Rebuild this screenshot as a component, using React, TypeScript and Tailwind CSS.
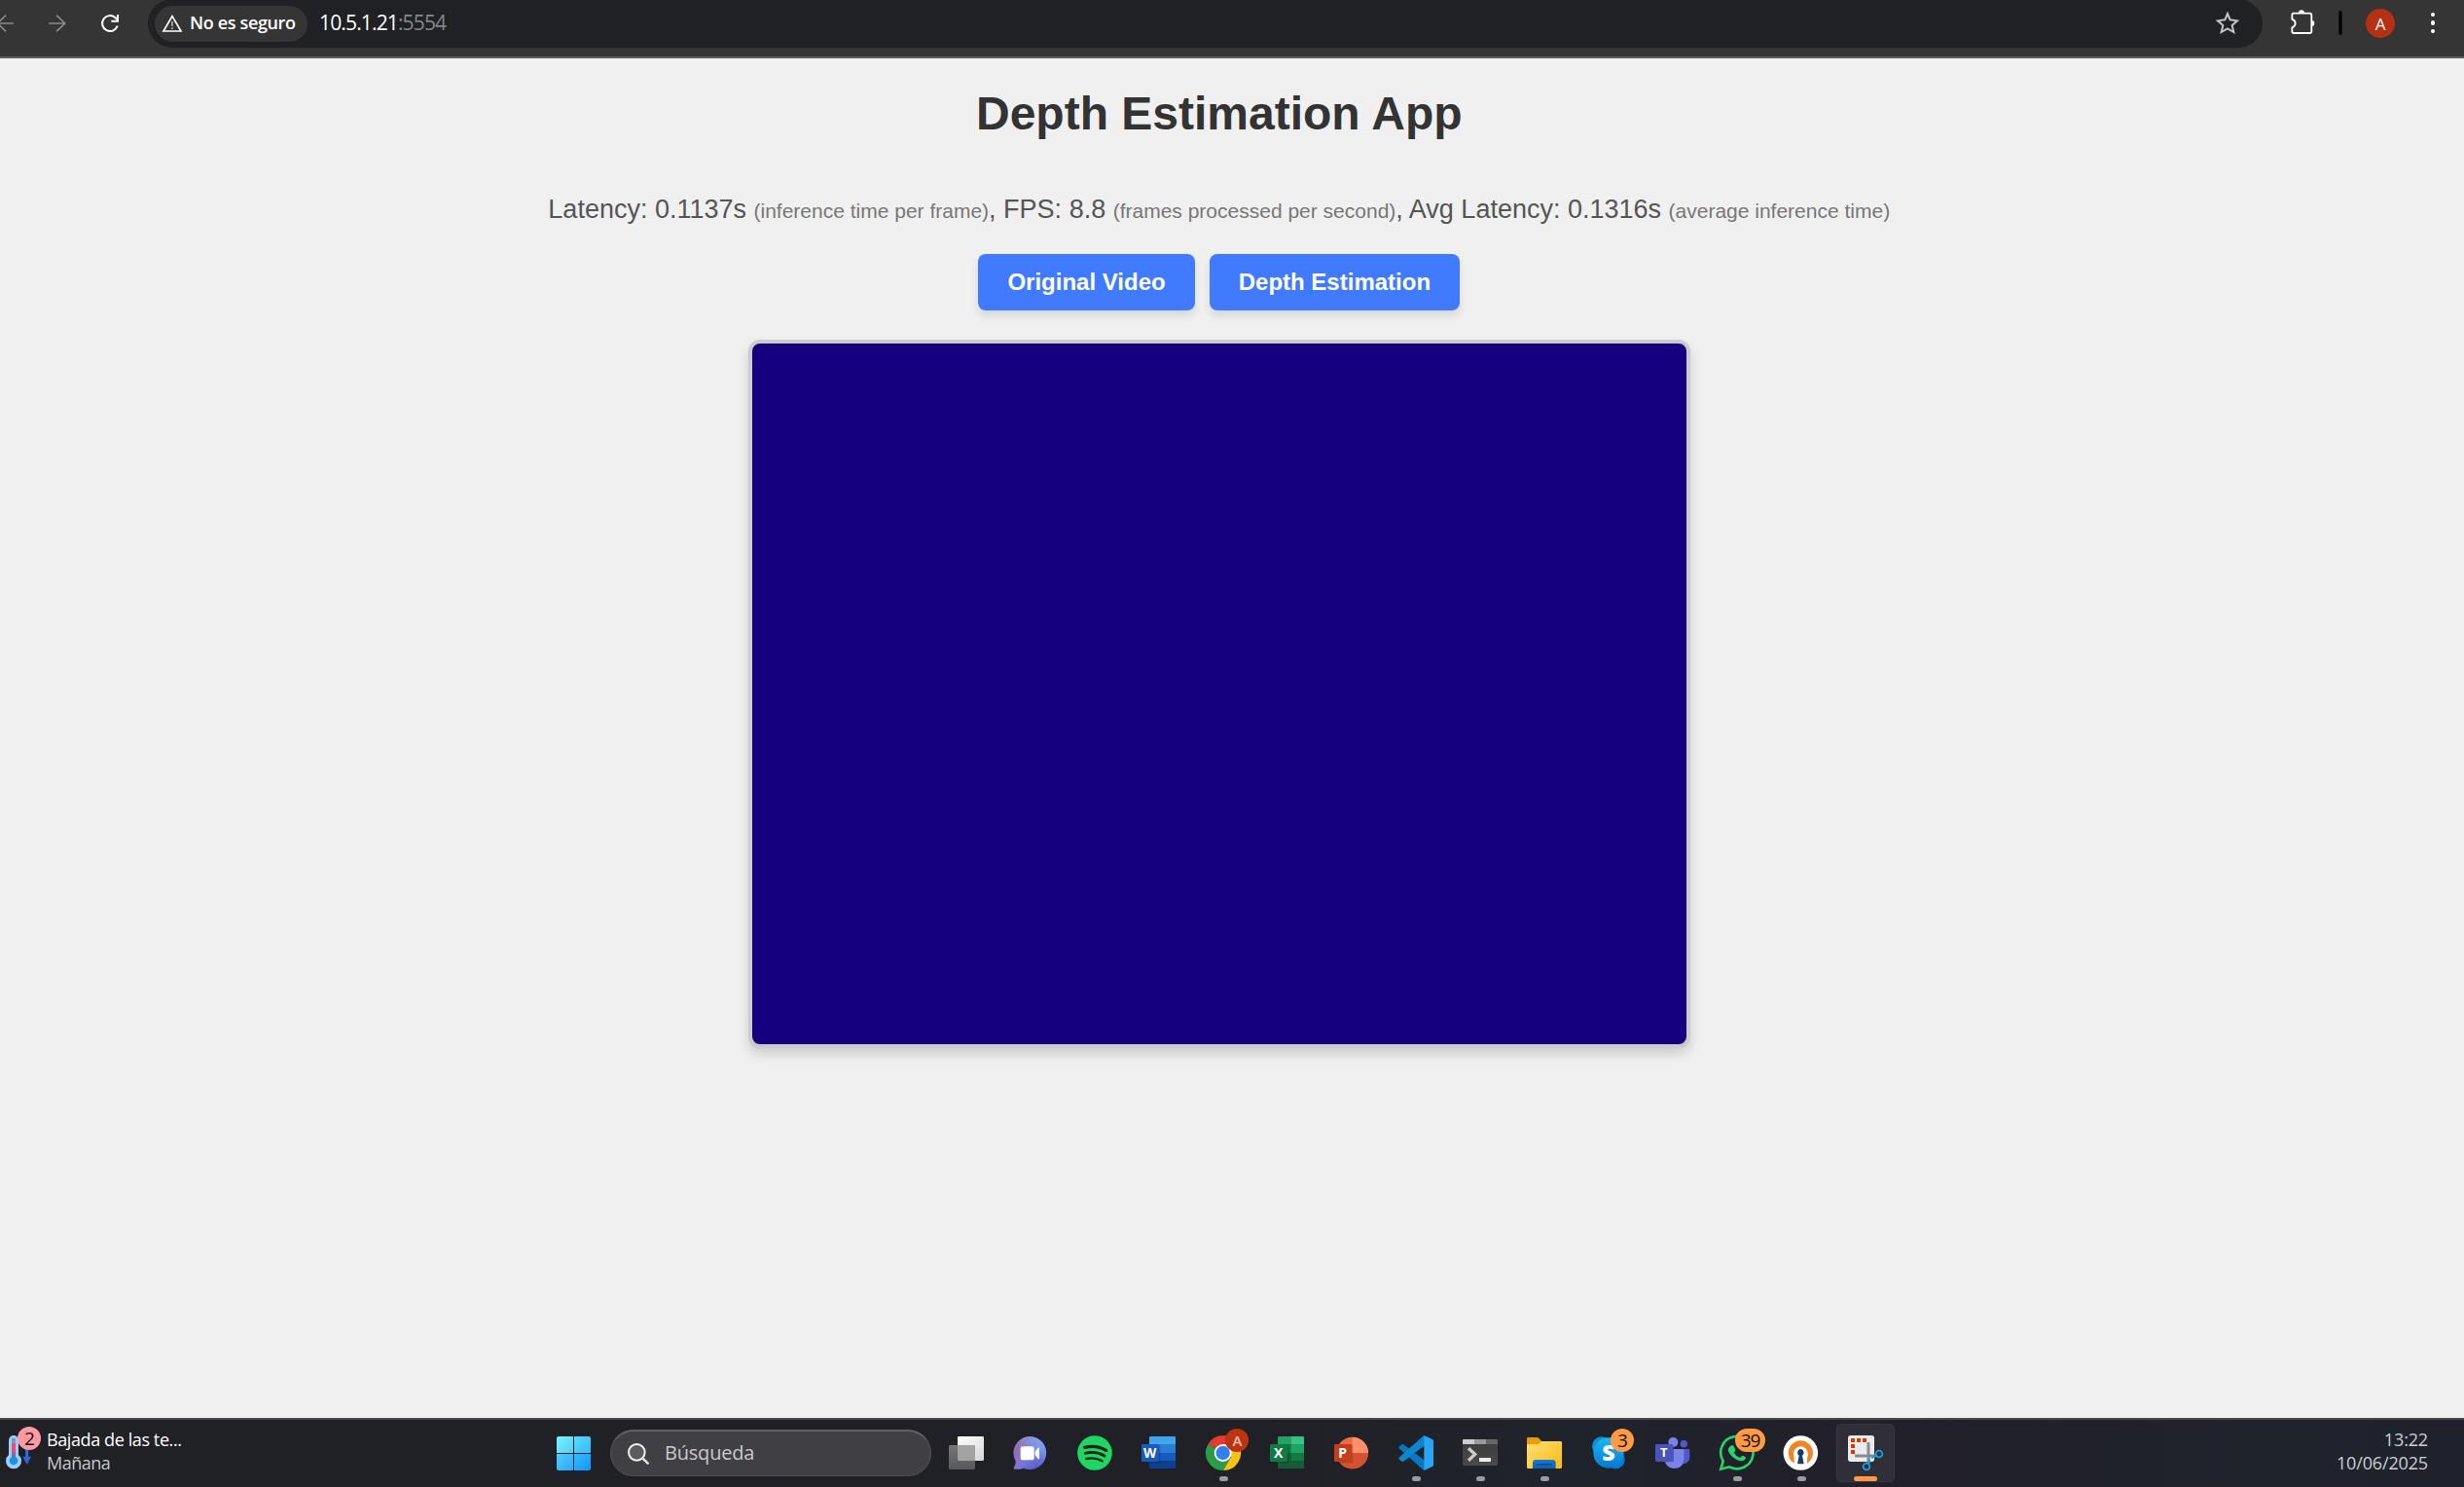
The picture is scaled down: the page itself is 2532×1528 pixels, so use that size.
import React from "react";

const UI = "font-['Open_Sans','Noto_Sans',sans-serif]";

function BrowserBar() {
  return (
    <header className="flex h-[60px] shrink-0 items-start border-b-2 border-[#5f5f5f] bg-[#353535]">
      <svg className="h-[50px] w-[152px] shrink-0" viewBox="0 0 456 150" fill="none">
        <path d="M42 72H-12M18 47L-7 72L18 97" stroke="#8b8b8b" strokeWidth="5" />
        <path d="M150 72H200M174 47L200 72L174 97" stroke="#8b8b8b" strokeWidth="5" />
        <path d="M362 80A24 24 0 1 1 355 54L363 62" stroke="#fff" strokeWidth="6" />
        <path d="M366 45V68H343V62H360V45Z" fill="#fff" />
      </svg>
      <div className="mt-[-1px] flex h-[50px] w-[2173px] shrink-0 items-center rounded-full bg-[#202124] pl-[7px]">
        <div className="flex h-[37px] w-[157px] items-center rounded-full bg-[#353535]">
          <svg className="ml-[7px] h-[22px] w-[22px]" viewBox="0 0 66 66" fill="none">
            <path d="M33 11L60 57H6Z" stroke="#fff" strokeWidth="5" />
            <path d="M33 27V42M33 46V51" stroke="#d0d0d0" strokeWidth="4" />
          </svg>
          <span className={`${UI} mb-[2px] ml-[7px] text-[18px] font-semibold leading-none tracking-[-0.35px] whitespace-nowrap text-white`}>No es seguro</span>
        </div>
        <span className={`${UI} mb-[1px] ml-[12px] text-[21px] leading-none tracking-[-0.85px] text-white`}>
          10.5.1.21<span className="text-[#85878a]">:5554</span>
        </span>
        <svg className="mr-[23px] ml-auto h-[26px] w-[26px]" viewBox="133 33 78 78" fill="none">
          <path d="M172 42L180 61L202 64L186 78L191 99L172 88L153 99L158 78L142 64L164 61Z" stroke="#c3c4c6" strokeWidth="6" />
        </svg>
      </div>
      <svg className="h-[50px] w-[90px] shrink-0" viewBox="279 0 270 150" fill="none">
        <path d="M373 41H424Q430 41 430 47V97Q430 102 424 102H375Q370 102 370 97V85Q380 81 380 72Q380 63 370 59V46Q370 41 375 41" stroke="#fff" strokeWidth="5.5" />
        <path d="M390 40a9 9 0 0 1 18 0ZM430 63a9 9 0 0 1 0 18Z" fill="#fff" />
        <rect x="514" y="34" width="10" height="73" rx="4" fill="#000" />
      </svg>
      <div className={`${UI} mt-[9px] ml-[16px] flex h-[30px] w-[30px] shrink-0 items-center justify-center rounded-full bg-[#b63013] text-[17px] leading-none text-white`}>A</div>
      <div className="mt-[13px] ml-[37px] flex flex-col gap-[4px]">
        <i className="h-[4.4px] w-[4.4px] rounded-full bg-white" />
        <i className="h-[4.4px] w-[4.4px] rounded-full bg-white" />
        <i className="h-[4.4px] w-[4.4px] rounded-full bg-white" />
      </div>
    </header>
  );
}

function Note({ children }: { children: React.ReactNode }) {
  return <small className="text-[21px] leading-none text-[#777]">({children})</small>;
}

function ModeButton({ children }: { children: React.ReactNode }) {
  return (
    <button className="h-[58px] rounded-[8px] bg-[#407bff] px-[30px] text-[24px] leading-none font-bold text-white shadow-[0_6px_9px_rgba(0,0,0,0.1)]">
      {children}
    </button>
  );
}

function Page() {
  return (
    <main className="flex grow flex-col items-center bg-[#f0f0f0] pr-[26.5px] font-['Liberation_Sans',Arial,sans-serif]">
      <h1 className="mt-[30px] text-[48px] leading-[54px] font-bold text-[#333]">Depth Estimation App</h1>
      <p className="mt-[55px] h-[32px] text-[27px] leading-[32px] whitespace-nowrap text-[#555]">
        Latency: 0.1137s <Note>inference time per frame</Note>, FPS: 8.8 <Note>frames processed per second</Note>, Avg Latency: 0.1316s <Note>average inference time</Note>
      </p>
      <div className="mt-[30px] flex gap-[15px]">
        <ModeButton>Original Video</ModeButton>
        <ModeButton>Depth Estimation</ModeButton>
      </div>
      <div className="mt-[30px] h-[728px] w-[968px] rounded-[12px] border-4 border-[#ccc] bg-[#150080] shadow-[0_6px_12px_rgba(0,0,0,0.15)]" />
    </main>
  );
}

function Icon({ x, children }: { x: number; children: React.ReactNode }) {
  return (
    <svg className="block h-[69px] w-[66px]" viewBox={`${x} 57 198 207`} fontFamily="Open Sans, sans-serif">
      {children}
    </svg>
  );
}

const dot = (x: number) => <rect x={x} y="231" width="27" height="15" rx="7.5" fill="#9b9ca0" />;

function Badge({ children, className }: { children: React.ReactNode; className: string }) {
  return (
    <span className={`${UI} absolute top-[9px] flex h-[24px] items-center justify-center rounded-full text-[19px] leading-none tracking-[-1px] ${className}`}>
      {children}
    </span>
  );
}

function Apps() {
  return (
    <div className="ml-[3px] flex">
      <Icon x={0}>
        <defs><linearGradient id="tv" x2="1" y2="1"><stop stopColor="#fff" /><stop offset="1" stopColor="#d6d6d6" /></linearGradient>
          <linearGradient id="tg" x2="0" y2="1"><stop stopColor="#777" /><stop offset="1" stopColor="#575757" /></linearGradient></defs>
        <rect x="72" y="108" width="81" height="75" rx="4" fill="url(#tv)" />
        <rect x="45" y="135" width="81" height="75" rx="4" fill="url(#tg)" />
        <path d="M72 135H122Q126 135 126 139V183H76Q72 183 72 179Z" fill="#a3a3a3" />
      </Icon>
      <Icon x={198}>
        <defs><linearGradient id="ch" x1="0.1" y1="0.2" x2="0.9" y2="0.9"><stop stopColor="#9a6bb0" /><stop offset=".5" stopColor="#7a78d8" /><stop offset="1" stopColor="#4f55c8" /></linearGradient>
          <linearGradient id="ch2" x1="1" x2="0" y2="1"><stop stopColor="#7fb2f5" /><stop offset=".6" stopColor="#7fb2f5" stopOpacity="0" /></linearGradient></defs>
        <path d="M295 108A51 51 0 1 1 275 206Q262 211 247 209Q243 208 246 203Q253 192 251 184A51 51 0 0 1 295 108Z" fill="url(#ch)" />
        <circle cx="295" cy="159" r="50" fill="url(#ch2)" />
        <rect x="266" y="139" width="42" height="42" rx="6" fill="#fff" />
        <path d="M311 155L320 143Q324 141 324 146V174Q324 179 320 177L311 165Z" fill="#fff" />
      </Icon>
      <Icon x={396}>
        <circle cx="495" cy="159" r="53.5" fill="#1ed760" />
        <g fill="none" stroke="#17231c" strokeLinecap="round">
          <path d="M464 142Q500 133 530 151" strokeWidth="10" />
          <path d="M466 160Q498 152 525 168" strokeWidth="8.5" />
          <path d="M469 177Q495 171 518 184" strokeWidth="7" />
        </g>
      </Icon>
      <Icon x={594}>
        <path d="M663 112Q663 108 667 108H740Q744 108 744 112V134H663Z" fill="#41a5ee" />
        <path d="M663 134H744V159H663Z" fill="#2b7cd3" /><path d="M663 159H744V183H663Z" fill="#185abd" />
        <path d="M663 183H744V203Q744 207 740 207H667Q663 207 663 203Z" fill="#103f91" />
        <rect x="666" y="135" width="31" height="55" fill="#000" opacity=".18" />
        <rect x="639" y="132" width="54" height="54" rx="4" fill="#185abd" />
        <text x="665" y="174" fontSize="41" fontWeight="700" fill="#fff" textAnchor="middle" textLength="40" lengthAdjust="spacingAndGlyphs">W</text>
      </Icon>
      <div className="relative">
        <Icon x={792}>
          <path d="M891 159L844.2 132A54 54 0 0 1 937.8 132Z" fill="#e33b2e" />
          <path d="M844.2 132A54 54 0 0 0 891 213L914 173L891 159Z" fill="#2a9d48" />
          <path d="M937.8 132H891L914.5 172.500L891 213A54 54 0 0 0 937.800 132Z" fill="#fbc116" />
          <circle cx="890" cy="159" r="27" fill="#fff" /><circle cx="890" cy="159" r="21.500" fill="#3180ee" />
          {dot(879)}
        </Icon>
        <Badge className="left-[35px] w-[24px] bg-[#be3410] text-[15px]! font-semibold text-[#eec0b2]">A</Badge>
      </div>
      <Icon x={-30}>
        <path d="M39 112Q39 108 43 108H79V134H39Z" fill="#21a366" /><path d="M79 108H116Q120 108 120 112V134H79Z" fill="#33c481" />
        <path d="M39 134H79V159H39Z" fill="#185c37" /><path d="M69 134H79V159H69Z" fill="#107c41" /><path d="M79 134H120V159H79Z" fill="#21a366" />
        <path d="M39 159H79V183H39Z" fill="#185c37" /><path d="M79 159H120V183H79Z" fill="#107c41" />
        <path d="M39 183H120V203Q120 207 116 207H43Q39 207 39 203Z" fill="#185c37" />
        <rect x="42" y="135" width="31" height="55" fill="#000" opacity=".18" />
        <rect x="15" y="132" width="54" height="54" rx="4" fill="#107c41" />
        <text x="41" y="174" fontSize="42" fontWeight="700" fill="#fff" textAnchor="middle">X</text>
      </Icon>
      <Icon x={168}>
        <circle cx="269" cy="159" r="49" fill="#ed6c47" />
        <path d="M269 110A49 49 0 0 1 318 159H269Z" fill="#ff8f6b" />
        <path d="M220 159A49 49 0 0 0 318 159Z" fill="#d35230" />
        <rect x="228" y="135" width="43" height="55" fill="#000" opacity=".15" />
        <rect x="213" y="132" width="54" height="54" rx="4" fill="#c43e1c" />
        <text x="239" y="174" fontSize="42" fontWeight="700" fill="#fff" textAnchor="middle">P</text>
      </Icon>
      <Icon x={366}>
        <path d="M413 140L421 133Q425 131 429 134L492 182V213L486 210L413 145Q411 142 413 140Z" fill="#0179c5" />
        <path d="M413 178L421 185Q425 187 429 184L492 136V105L486 108L413 173Q411 176 413 178Z" fill="#0e86cf" />
        <path d="M490 105L516 117Q519 119 519 123V195Q519 199 516 201L490 213Z" fill="#27a5f3" />
        {dot(453)}
      </Icon>
      <Icon x={564}>
        <defs><linearGradient id="tm" x2="0" y2="1"><stop stopColor="#3b3b3b" /><stop offset="1" stopColor="#4a4a4a" /></linearGradient></defs>
        <rect x="609" y="117" width="108" height="81" rx="5" fill="url(#tm)" />
        <path d="M609 132V121Q609 117 613 117H645V132Z" fill="#ccc" /><path d="M645 117H681V132H645Z" fill="#999" />
        <path d="M681 117H713Q717 117 717 121V132H681Z" fill="#666" />
        <path d="M627 145L647 163L627 182" fill="none" stroke="#ccc" strokeWidth="10" />
        <rect x="660" y="174" width="36" height="12" rx="2" fill="#eee" />
        {dot(651)}
      </Icon>
      <Icon x={762}>
        <defs><linearGradient id="fo" x2="1" y2="1"><stop stopColor="#ffe07a" /><stop offset="1" stopColor="#fbb90e" /></linearGradient>
          <linearGradient id="fb" x2="0" y2="1"><stop stopColor="#157ad6" /><stop offset="1" stopColor="#0e5fb3" /></linearGradient></defs>
        <path d="M807 140V115Q807 111 811 111H838Q842 111 845 115L852 122V140Z" fill="#e2a005" />
        <path d="M807 133H838Q842 133 846 129L852 123H911Q915 123 915 127V203Q915 207 911 207H811Q807 207 807 203Z" fill="url(#fo)" />
        <path d="M825 207V190Q825 180 835 180H886Q896 180 896 190V207Z" fill="url(#fb)" />
        <path d="M837 194H884" stroke="#0a4380" strokeWidth="4" />
        {dot(849)}
      </Icon>
      <div className="relative">
        <Icon x={-60}>
          <defs><linearGradient id="sk" x2="0" y2="1"><stop stopColor="#1cb8f0" /><stop offset="1" stopColor="#0878d4" /></linearGradient></defs>
          <circle cx="17" cy="138" r="29" fill="#0c8fdb" /><circle cx="61" cy="180" r="28" fill="#0878d4" />
          <circle cx="39" cy="159" r="47" fill="url(#sk)" />
          <text x="39" y="184" fontSize="70" fontWeight="800" fill="#fff" textAnchor="middle">S</text>
        </Icon>
        <Badge className="left-[35px] w-[24px] bg-[#ff9a45] text-[#17100a]">3</Badge>
      </div>
      <Icon x={138}>
        <circle cx="271" cy="131" r="11" fill="#5059c9" /><path d="M262 147H285Q289 147 289 151V173Q287 193 262 193Z" fill="#5059c9" />
        <circle cx="238" cy="126" r="15" fill="#7b83eb" /><path d="M212 147H267Q271 147 271 151V180Q268 207 240 207Q215 205 212 180Z" fill="#7b83eb" />
        <path d="M212 147H240V187H212Z" fill="#5a62c4" />
        <rect x="183" y="132" width="55" height="54" rx="4" fill="#4b53bc" />
        <text x="209" y="172" fontSize="39" fontWeight="700" fill="#fff" textAnchor="middle">T</text>
      </Icon>
      <div className="relative">
        <Icon x={336}>
          <path d="M385 209L392 184A50 50 0 1 1 411 202Z" fill="none" stroke="#25d366" strokeWidth="8" />
          <path d="M415 137Q421 132 425 138L430 149Q431 152 425 158Q432 170 444 174L450 168Q452 166 455 168L461 172Q464 175 459 180Q450 187 436 181Q415 171 408 154Q405 144 415 137Z" fill="#25d366" />
          {dot(423)}
        </Icon>
        <Badge className="left-[31px] w-[31px] bg-[#ff9a45] text-[#17100a]">39</Badge>
      </div>
      <Icon x={534}>
        <circle cx="631" cy="159" r="53.500" fill="#fff" />
        <path d="M611 191A38 38 0 1 1 651 191V174A22 22 0 1 0 611 174Z" fill="#f08522" />
        <circle cx="631" cy="161" r="22" fill="#fff" />
        <path d="M631 147a11 11 0 0 1 5 20L641 193H621L626 167a11 11 0 0 1 5-20Z" fill="#1c3a66" />
        {dot(621)}
      </Icon>
      <Icon x={732}>
        <rect x="742" y="70" width="177" height="178" rx="15" fill="#302f38" stroke="#3c3b44" strokeWidth="3" />
        <rect x="777" y="105" width="81" height="81" rx="8" fill="#e9ecef" />
        <path d="M786 114H798V126H786ZM804 114H816V126H804ZM822 114H834V126H822ZM786 132H798V144H786ZM786 150H798V162H786Z" fill="#d83b01" />
        <path d="M840 126V192M798 168H862" fill="none" stroke="#858b91" strokeWidth="9" />
        <circle cx="873" cy="162" r="10" fill="none" stroke="#199be2" strokeWidth="5.500" /><circle cx="834" cy="201" r="10" fill="none" stroke="#199be2" strokeWidth="5.500" />
        <path d="M850 174L863 168M837 190L845 178" stroke="#199be2" strokeWidth="6" />
        <rect x="795" y="231" width="72" height="15" rx="7.500" fill="#ff9a45" />
      </Icon>
    </div>
  );
}

function Taskbar() {
  return (
    <footer className={`${UI} flex h-[71px] shrink-0 border-t-2 border-[#48484b] bg-[linear-gradient(90deg,#202125_0%,#202126_50%,#1f232b_65%,#22202a_75%,#1f232c_92%,#1f222c_100%)]`}>
      <div className="relative flex w-[572px] shrink-0">
        <svg className="h-[69px] w-[48px]" viewBox="0 57 144 207">
          <path d="M83 145V175" stroke="#2f6be6" strokeWidth="9" /><path d="M70 170H96L83 195Z" fill="#2f62dd" />
          <path d="M27 165V120A15 15 0 0 1 57 120V165A24 24 0 1 1 27 165Z" fill="#9bcffa" />
          <rect x="36" y="114" width="12" height="60" fill="#7298cf" /><rect x="36" y="129" width="12" height="28" fill="#f04a6b" /><rect x="36" y="155" width="12" height="20" fill="#985ca0" />
          <circle cx="42" cy="183" r="13" fill="#1794dc" />
        </svg>
        <Badge className="top-[7px]! left-[18px] w-[24px] bg-[#ff99a4] text-[#1b1012]">2</Badge>
        <div className="mt-[8px] text-[18px] leading-[24px] whitespace-nowrap">
          <p className="tracking-[-0.4px] text-white">Bajada de las te...</p>
          <p className="tracking-[-0.5px] text-[#c6c7c9]">Mañana</p>
        </div>
      </div>
      <div className="mt-[17px] grid h-[35px] w-[35px] shrink-0 grid-cols-2 gap-px overflow-hidden rounded-[2px]">
        <i className="bg-linear-to-br from-[#7df3ff] to-[#4bcdfd]" />
        <i className="bg-linear-to-br from-[#5bdcff] to-[#32b8fb]" />
        <i className="bg-linear-to-br from-[#4fcdfd] to-[#24a9fb]" />
        <i className="bg-linear-to-br from-[#34b9fc] to-[#0d97fb]" />
      </div>
      <div className="mt-[10px] ml-[20px] flex h-[48px] w-[330px] shrink-0 items-center rounded-full border border-t-2 border-[#505054] border-t-[#626266] bg-[#404044] pl-[15px]">
        <svg className="h-[26px] w-[26px]" viewBox="0 0 78 78" fill="none">
          <circle cx="34" cy="34" r="25" fill="#5b5b5f" stroke="#eee" strokeWidth="6" />
          <path d="M52 52L68 68" stroke="#dfe0e1" strokeWidth="8" strokeLinecap="round" />
        </svg>
        <span className="mb-[2px] ml-[14px] text-[20px] leading-none tracking-[-0.2px] text-[#c9cacb]">Búsqueda</span>
      </div>
      <Apps />
      <div className="mt-[8px] mr-[37px] ml-auto text-right text-[18px] leading-[24px] tracking-[-0.15px] text-[#cdced0]">
        <p>13:22</p>
        <p>10/06/2025</p>
      </div>
    </footer>
  );
}

export default function App() {
  return (
    <div className="flex h-[1528px] w-[2532px] flex-col overflow-hidden">
      <BrowserBar />
      <Page />
      <Taskbar />
    </div>
  );
}
